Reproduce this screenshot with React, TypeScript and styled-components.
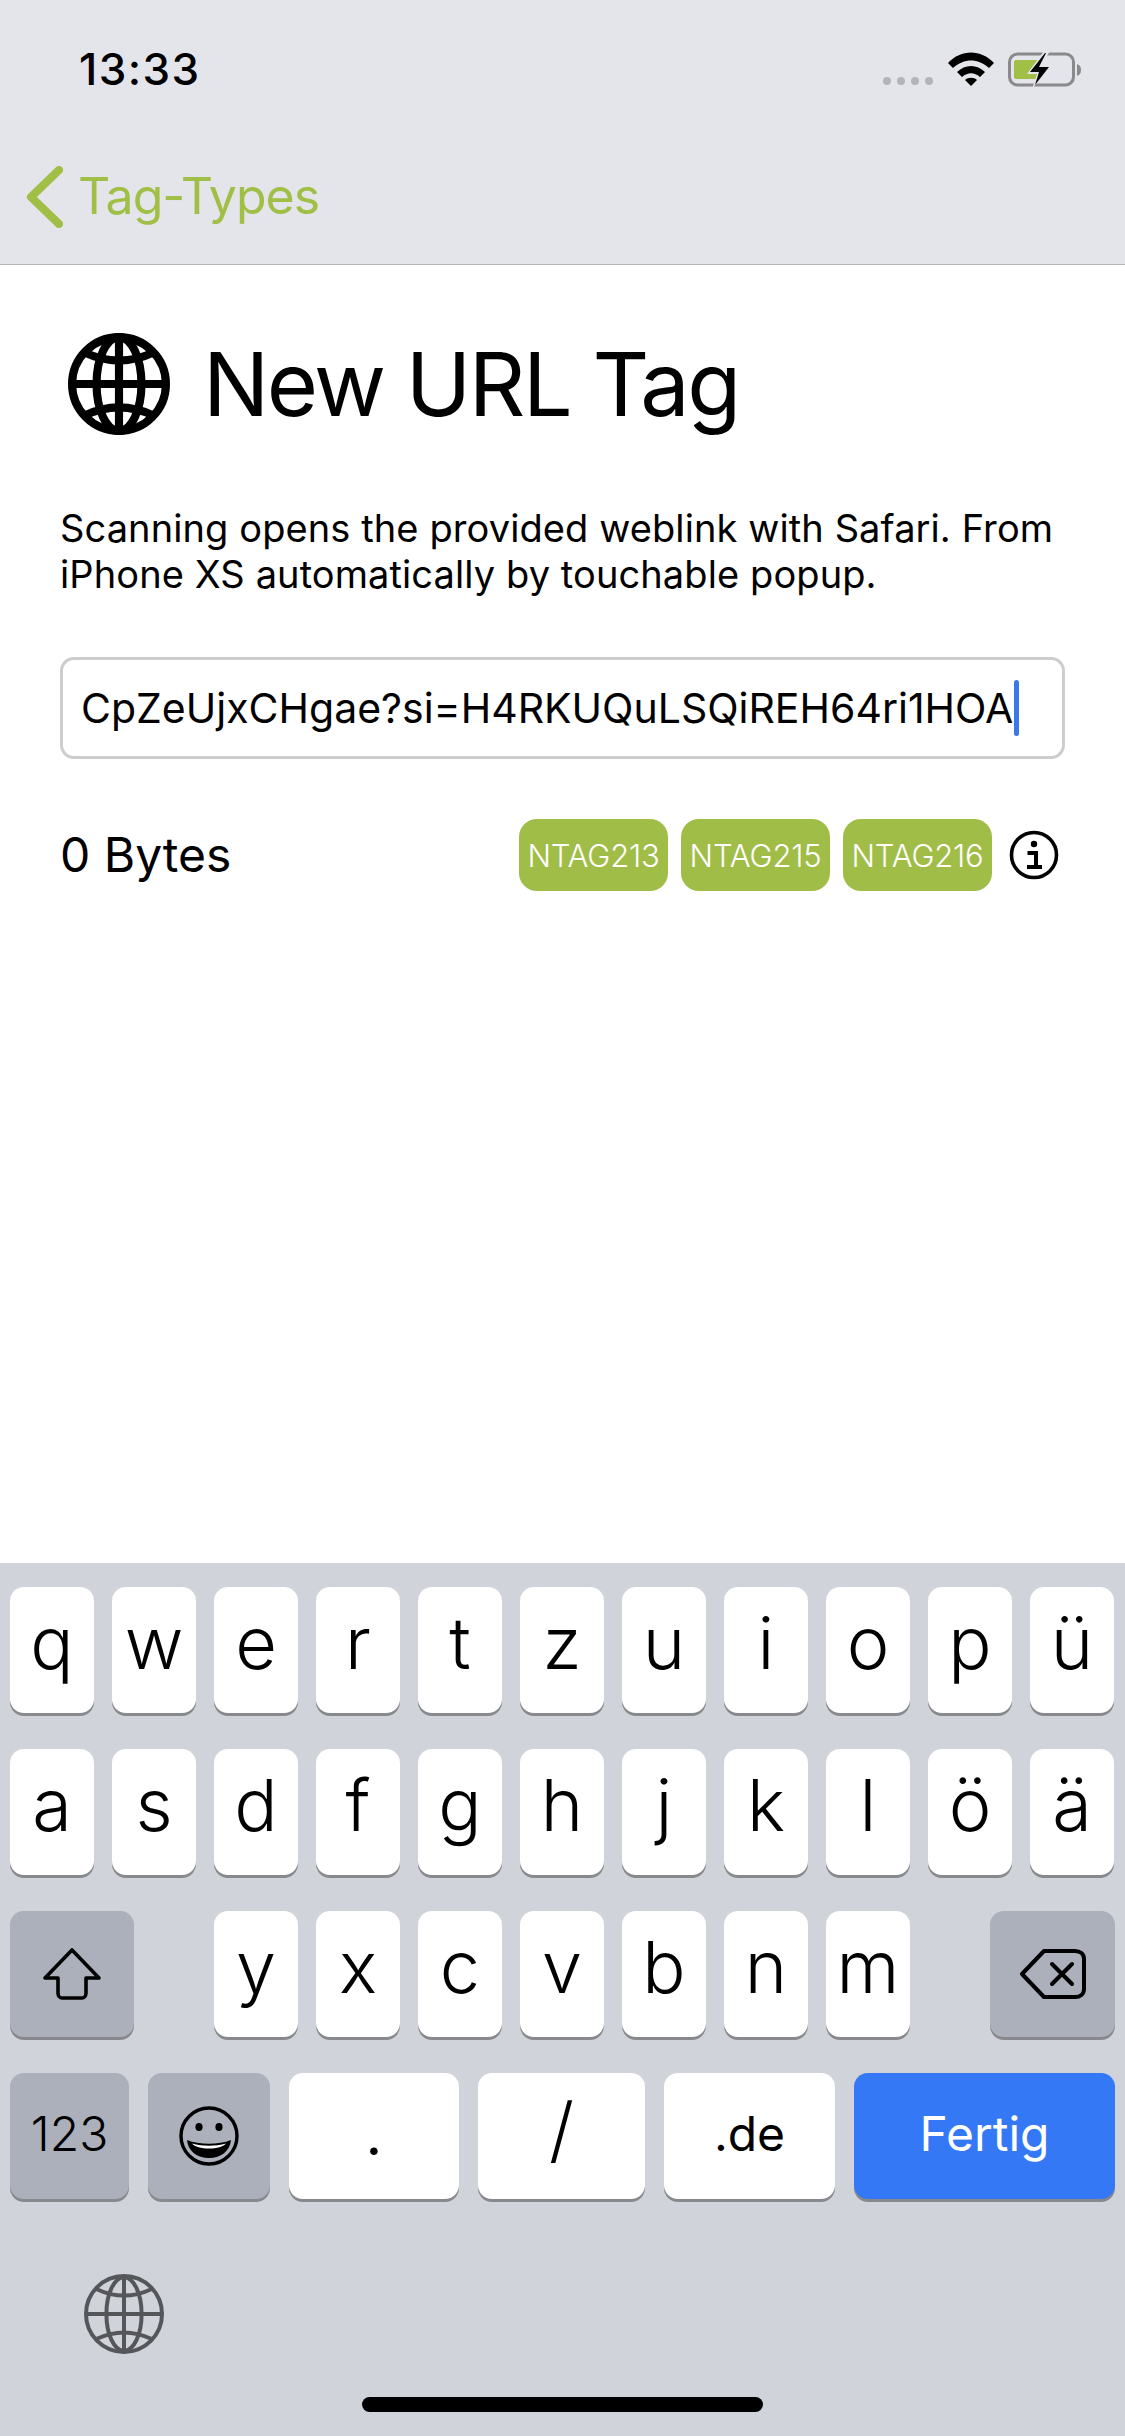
import React from "react";
import styled, { createGlobalStyle } from "styled-components";

const GlobalStyle = createGlobalStyle`
  html, body {
    margin: 0;
    padding: 0;
    background: #fff;
  }
  * {
    box-sizing: border-box;
  }
`;

const Page = styled.div`
  width: 1125px;
  height: 2436px;
  display: flex;
  flex-direction: column;
  overflow: hidden;
  background: #fff;
  color: #000;
  font-family: Inter, "Liberation Sans", sans-serif;
`;

const TopBar = styled.header`
  height: 265px;
  flex: none;
  background: #e4e5ea;
  border-bottom: 1.5px solid #b5b5b8;
`;

const StatusRow = styled.div`
  height: 103px;
  padding: 49px 43px 0 79px;
  display: flex;
  justify-content: space-between;
  align-items: flex-start;
`;

const Time = styled.div`
  font-size: 44px;
  line-height: 40px;
  font-weight: 500;
  letter-spacing: 1.4px;
`;

const StatusIcons = styled.div`
  display: flex;
  align-items: flex-start;
  margin-top: 3px;
`;

const SignalDots = styled.div`
  display: flex;
  gap: 6px;
  margin: 25px 15px 0 0;
`;

const SignalDot = styled.span`
  width: 8px;
  height: 8px;
  border-radius: 50%;
  background: #b4b4b8;
`;

const BackLink = styled.div`
  display: flex;
  align-items: center;
  gap: 15px;
  padding: 62px 0 0 26px;
  color: #a0bf47;
  font-size: 50px;
  line-height: 62px;
  letter-spacing: -1px;
`;

const BackLabel = styled.span`
  margin-bottom: 2px;
`;

const Content = styled.main`
  flex: 1;
  padding: 68px 66px 0 60px;
`;

const TitleRow = styled.div`
  display: flex;
  align-items: center;
  gap: 33px;
  padding-left: 8px;
`;

const Title = styled.h1`
  margin: 0;
  font-size: 88px;
  line-height: 102px;
  font-weight: 400;
  letter-spacing: -2.5px;
`;

const Description = styled.p`
  margin: 70px 0 0;
  font-size: 38px;
  line-height: 46px;
  letter-spacing: 0.1px;
`;

const UrlField = styled.div`
  margin-top: 60px;
  width: 1005px;
  height: 102px;
  display: flex;
  align-items: center;
  padding-left: 18px;
  border: 3px solid #cdcdcd;
  border-radius: 14px;
  font-size: 41px;
  white-space: nowrap;
`;

const Caret = styled.span`
  width: 5px;
  height: 56px;
  margin-left: 1px;
  border-radius: 3px;
  background: #3b78e7;
`;

const MetaRow = styled.div`
  margin-top: 60px;
  display: flex;
  align-items: center;
`;

const ByteCount = styled.div`
  font-size: 48px;
  line-height: 72px;
  margin-right: auto;
`;

const Badges = styled.div`
  display: flex;
  gap: 13px;
  margin-right: 17px;
`;

const Badge = styled.div`
  width: 149px;
  height: 72px;
  display: flex;
  align-items: center;
  justify-content: center;
  background: #a0bd47;
  border-radius: 18px;
  color: #fff;
  font-size: 31px;
  font-weight: 300;
  letter-spacing: -0.2px;
`;

const Keyboard = styled.section`
  height: 873px;
  flex: none;
  position: relative;
  padding: 24px 10px 0;
  background: #d0d3da;
  display: flex;
  flex-direction: column;
  gap: 36px;
`;

const KeyRow = styled.div<{ $gap?: number }>`
  display: flex;
  gap: ${(p) => p.$gap ?? 18}px;
`;

const RowGap = styled.div`
  flex: 1;
`;

const Key = styled.div<{ $width?: number; $tone?: "letter" | "action" | "accent"; $small?: boolean }>`
  width: ${(p) => p.$width ?? 84}px;
  height: 126px;
  flex: none;
  display: flex;
  align-items: center;
  justify-content: center;
  padding-bottom: ${(p) => (p.$small ? 6 : 16)}px;
  border-radius: 14px;
  box-shadow: 0 3px 0 #88898d;
  font-size: ${(p) => (p.$small ? 48 : 72)}px;
  font-weight: ${(p) => (p.$small && p.$tone !== "action" ? 400 : 300)};
  color: ${(p) => (p.$tone === "accent" ? "#fff" : "#000")};
  background: ${(p) =>
    p.$tone === "action" ? "#abb0ba" : p.$tone === "accent" ? "#3478f6" : "#fff"};
`;

const IconKey = styled(Key)`
  padding-bottom: 0;
`;

const GlobeButton = styled.div`
  margin: 39px 0 0 74px;
  width: 80px;
  height: 80px;
  color: #54565a;
`;

const HomeBar = styled.div`
  position: absolute;
  left: 362px;
  bottom: 24px;
  width: 401px;
  height: 15px;
  border-radius: 8px;
  background: #000;
`;

function Globe({ size, weight }: { size: number; weight: number }) {
  return (
    <svg width={size} height={size} viewBox="0 0 100 100" fill="none" stroke="currentColor" strokeWidth={weight}>
      <circle cx="50" cy="50" r={50 - weight / 2} />
      <ellipse cx="50" cy="50" rx="22" ry="46" />
      <path d="M50 4V96M4 50H96M16 19Q50 35 84 19M16 81Q50 65 84 81" />
    </svg>
  );
}

function Wifi() {
  return (
    <svg width="46" height="34" viewBox="0 0 46 34">
      <path d="M0 11C13-3 33-3 46 11L41 16C30 6 16 6 5 16Z" />
      <path d="M9 20C17 12 29 12 37 20L32 25C26 20 20 20 14 25Z" />
      <path d="M17 28C20 25 26 25 29 28L23 34Z" />
    </svg>
  );
}

function Battery() {
  return (
    <svg width="74" height="36" viewBox="0 0 74 36" style={{ marginLeft: 14 }}>
      <rect x="1.5" y="2" width="64" height="31" rx="8" fill="none" stroke="#8a8a8c" strokeWidth="3" />
      <path d="M69 12C72 13 73 15 73 18C73 21 72 23 69 24Z" fill="#8a8a8c" />
      <path d="M8 8H31V27H8C7 27 6 26 6 25V10C6 9 7 8 8 8Z" fill="#a0bf47" />
      <path d="M36 -1L19 22H29L24 37L43 14H33L42 -1Z" fill="#e4e5ea" />
      <path d="M37 1L22 20H31L27 33L41 15H31L38 1Z" fill="#000" />
    </svg>
  );
}

function Chevron() {
  return (
    <svg width="37" height="62" viewBox="0 0 37 62" fill="none" stroke="#a0bf47" strokeWidth="8" strokeLinecap="round" strokeLinejoin="round">
      <path d="M33 4L5 31L33 58" />
    </svg>
  );
}

function InfoIcon() {
  return (
    <svg width="50" height="50" viewBox="0 0 50 50">
      <circle cx="25" cy="25" r="22.5" fill="none" stroke="#000" strokeWidth="3.6" />
      <circle cx="25" cy="14" r="3.2" />
      <path d="M18.5 21H29V35H33V39H18V35H25V25H18.5Z" />
    </svg>
  );
}

function ShiftIcon() {
  return (
    <svg width="60" height="54" viewBox="0 0 60 54" fill="none" stroke="#000" strokeWidth="3.6" strokeLinejoin="round">
      <path d="M30 3L57 31H44V46C44 49 42 51 40 51H20C18 51 16 49 16 46V31H3Z" />
    </svg>
  );
}

function DeleteIcon() {
  return (
    <svg width="68" height="52" viewBox="0 0 68 52" fill="none" stroke="#000" strokeWidth="4" strokeLinejoin="round">
      <path d="M25 3H56C61 3 65 6 65 11V41C65 46 61 49 56 49H25L3 26Z" />
      <path d="M33 16L53 36M53 16L33 36" strokeLinecap="round" />
    </svg>
  );
}

function SmileyIcon() {
  return (
    <svg width="60" height="60" viewBox="0 0 60 60">
      <circle cx="30" cy="30" r="28" fill="none" stroke="#000" strokeWidth="3.4" />
      <ellipse cx="20" cy="21" rx="3.6" ry="4" />
      <ellipse cx="40" cy="21" rx="3.6" ry="4" />
      <path d="M8 34C20 39 40 39 52 34C51 45 42 52 30 52C18 52 9 45 8 34Z" />
      <path d="M13 37.5C24 40.5 36 40.5 47 37.5C44 41 38 42.5 30 42.5C22 42.5 16 41 13 37.5Z" fill="#fff" />
    </svg>
  );
}

const ROW_ONE = ["q", "w", "e", "r", "t", "z", "u", "i", "o", "p", "ü"];
const ROW_TWO = ["a", "s", "d", "f", "g", "h", "j", "k", "l", "ö", "ä"];
const ROW_THREE = ["y", "x", "c", "v", "b", "n", "m"];
const BADGES = ["NTAG213", "NTAG215", "NTAG216"];

export default function App() {
  return (
    <Page>
      <GlobalStyle />
      <TopBar>
        <StatusRow>
          <Time>13:33</Time>
          <StatusIcons>
            <SignalDots>
              <SignalDot />
              <SignalDot />
              <SignalDot />
              <SignalDot />
            </SignalDots>
            <Wifi />
            <Battery />
          </StatusIcons>
        </StatusRow>
        <BackLink>
          <Chevron />
          <BackLabel>Tag-Types</BackLabel>
        </BackLink>
      </TopBar>

      <Content>
        <TitleRow>
          <Globe size={102} weight={8} />
          <Title>New URL Tag</Title>
        </TitleRow>
        <Description>
          Scanning opens the provided weblink with Safari. From
          <br />
          iPhone XS automatically by touchable popup.
        </Description>
        <UrlField>
          <span>CpZeUjxCHgae?si=H4RKUQuLSQiREH64ri1HOA</span>
          <Caret />
        </UrlField>
        <MetaRow>
          <ByteCount>0 Bytes</ByteCount>
          <Badges>
            {BADGES.map((b) => (
              <Badge key={b}>{b}</Badge>
            ))}
          </Badges>
          <InfoIcon />
        </MetaRow>
      </Content>

      <Keyboard>
        <KeyRow>
          {ROW_ONE.map((k) => (
            <Key key={k}>{k}</Key>
          ))}
        </KeyRow>
        <KeyRow>
          {ROW_TWO.map((k) => (
            <Key key={k}>{k}</Key>
          ))}
        </KeyRow>
        <KeyRow>
          <IconKey $width={124} $tone="action">
            <ShiftIcon />
          </IconKey>
          <RowGap />
          {ROW_THREE.map((k) => (
            <Key key={k}>{k}</Key>
          ))}
          <RowGap />
          <IconKey $width={125} $tone="action">
            <DeleteIcon />
          </IconKey>
        </KeyRow>
        <KeyRow $gap={19}>
          <Key $width={119} $tone="action" $small>123</Key>
          <IconKey $width={122} $tone="action">
            <SmileyIcon />
          </IconKey>
          <Key $width={170}>.</Key>
          <Key $width={167}>/</Key>
          <Key $width={171} $small>.de</Key>
          <Key $width={261} $tone="accent" $small>Fertig</Key>
        </KeyRow>
        <GlobeButton>
          <Globe size={80} weight={5} />
        </GlobeButton>
        <HomeBar />
      </Keyboard>
    </Page>
  );
}
